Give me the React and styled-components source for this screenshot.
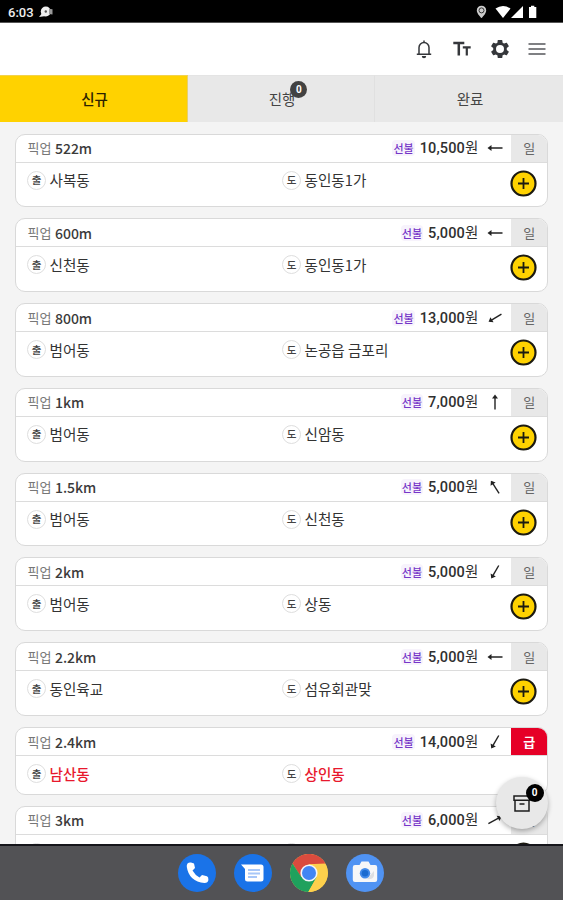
import React from 'react';
import styled, { createGlobalStyle } from 'styled-components';

const Global = createGlobalStyle`
  * { box-sizing: border-box; }
  body { margin: 0; overflow: hidden; font-family: "Noto Sans CJK KR", sans-serif; }
`;

const Screen = styled.div`
  width: 563px;
  height: 900px;
  display: flex;
  flex-direction: column;
  background: #f4f4f4;
  overflow: hidden;
  position: relative;
`;

const StatusBar = styled.header`
  height: 23px;
  flex: none;
  background: #000;
  border-bottom: 1px solid #555;
  display: flex;
  align-items: center;
  padding: 2px 25px 0 8px;
  color: #eee;
`;

const Clock = styled.span`
  font: 500 13px/20px Roboto, sans-serif;
  padding-top: 1px;
  margin-right: 5px;
`;

const StatusIcons = styled.div`
  margin-left: auto;
  display: flex;
  align-items: center;
`;

const Toolbar = styled.div`
  height: 52px;
  flex: none;
  background: #fff;
  display: flex;
  align-items: center;
  justify-content: flex-end;
  gap: 18px;
  padding-right: 17px;
`;

const Tabs = styled.nav`
  height: 47px;
  flex: none;
  display: grid;
  grid-template-columns: 188px 187px 188px;
`;

const Tab = styled.div`
  display: flex;
  align-items: center;
  justify-content: center;
  padding-left: 2px;
  background: ${(p) => (p.$active ? '#ffd200' : '#e8e8e8')};
  color: ${(p) => (p.$active ? '#2b2200' : '#444')};
  border-right: 1px solid ${(p) => (p.$active ? '#e5cf70' : '#e0e0e0')};
  border-top: 1px solid ${(p) => (p.$active ? '#f2d24c' : '#e4e4e4')};
  font-size: 14.5px;
  font-weight: ${(p) => (p.$active ? 500 : 400)};
  line-height: 20px;

  &:last-child {
    border-right: 0;
  }
`;

const TabLabel = styled.span`
  position: relative;
`;

const CountBadge = styled.span`
  position: absolute;
  display: flex;
  align-items: center;
  justify-content: center;
  border-radius: 50%;
  color: #fff;
  font: 700 10px/1 Roboto, sans-serif;
  width: ${(p) => p.$size}px;
  height: ${(p) => p.$size}px;
  top: ${(p) => p.$top}px;
  right: ${(p) => p.$right}px;
  background: ${(p) => p.$color};
`;

const List = styled.main`
  flex: 1;
  min-height: 0;
  overflow: hidden;
  display: flex;
  flex-direction: column;
  gap: 11px;
  padding: 11.5px 15px 0;
`;

const Card = styled.article`
  flex: none;
  height: ${(p) => (p.$urgent ? 67.5 : 73.8)}px;
  background: #fff;
  border: 1px solid #d9d9d9;
  border-radius: 10px;
  overflow: hidden;
`;

const CardHead = styled.div`
  height: 28px;
  display: flex;
  align-items: center;
  border-bottom: 1px solid #dcdcdc;
  padding-left: 11.5px;
`;

const Pickup = styled.span`
  font-size: 13px;
  line-height: 20px;
  color: #777;
  margin-right: 3.5px;
`;

const Distance = styled.span`
  font-size: 14px;
  font-weight: 500;
  line-height: 20px;
  color: #3b3b3b;
`;

const Prepaid = styled.span`
  margin-left: auto;
  margin-right: 5px;
  padding: 0 1px;
  border-radius: 4px;
  background: #f7f3fc;
  color: #7636c8;
  font-size: 11px;
  font-weight: 500;
  line-height: 16px;
`;

const Price = styled.span`
  font: 500 14.5px/20px Roboto, "Noto Sans CJK KR", sans-serif;
  letter-spacing: 0.15px;
  color: #303030;
`;

const Won = styled.span`
  font: 400 14.5px/20px "Noto Sans CJK KR", sans-serif;
`;

const ArrowSlot = styled.span`
  width: 32px;
  display: flex;
  justify-content: center;
`;

const Grade = styled.span`
  width: 36.5px;
  align-self: stretch;
  display: flex;
  align-items: center;
  justify-content: center;
  padding-left: 1px;
  font-size: 13px;
  line-height: 20px;
  font-weight: ${(p) => (p.$urgent ? 700 : 400)};
  color: ${(p) => (p.$urgent ? '#fff' : '#666')};
  background: ${(p) => (p.$urgent ? '#e60027' : '#e8e8e8')};
`;

const CardBody = styled.div`
  display: grid;
  grid-template-columns: 255px 1fr 27px;
  padding: 6.5px 10px 0 11px;
`;

const Place = styled.div`
  display: flex;
  align-items: center;
  height: 22px;
  gap: 3.5px;
  font-size: 14.6px;
  line-height: 22px;
  color: ${(p) => (p.$urgent ? '#e8182d' : '#333')};
  font-weight: ${(p) => (p.$urgent ? 500 : 400)};
`;

const Mark = styled.span`
  width: 19px;
  height: 19px;
  border: 1px solid #dedede;
  border-radius: 50%;
  display: flex;
  align-items: center;
  justify-content: center;
  color: #444;
  font-size: 10.5px;
  font-weight: 500;
  line-height: 16px;
`;

const AddButton = styled.button`
  width: 27px;
  height: 27px;
  margin-top: 0.5px;
  border: 0;
  padding: 0;
  background: none;
  display: block;
`;

const Fab = styled.button`
  position: absolute;
  left: 496px;
  top: 777px;
  width: 52px;
  height: 52px;
  border: 0;
  border-radius: 50%;
  background: #e8e8e8;
  box-shadow: 0 2px 5px rgba(0, 0, 0, 0.3);
  display: flex;
  align-items: center;
  justify-content: center;
  padding: 0;
`;

const Dock = styled.footer`
  height: 56px;
  flex: none;
  border-top: 2px solid #15151a;
  background: #525255;
  display: flex;
  justify-content: center;
  align-items: center;
  gap: 18px;
  padding-right: 1px;
`;

const ANGLES = { w: 180, sw: 149, n: -90, nw: -123, ssw: 120, ne: -28 };

const Arrow = ({ dir }) => (
  <svg width="18" height="18" viewBox="-9 -9 18 18" fill="none" stroke="#222" strokeWidth="1.4">
    <g transform={`rotate(${ANGLES[dir]})`}>
      <path d="M-7.5 0H6" />
      <path d="M3.5 -3L7.5 0L3.5 3" fill="#222" stroke="none" />
    </g>
  </svg>
);

const Plus = () => (
  <svg width="27" height="27" viewBox="0 0 27 27">
    <circle cx="13.5" cy="13.5" r="12" fill="#ffd200" stroke="#1c1a10" strokeWidth="2.2" />
    <path d="M13.5 8v11M8 13.5h11" stroke="#1c1a10" strokeWidth="1.8" />
  </svg>
);

const Notice = () => (
  <svg width="15" height="13" viewBox="0 0 15 13" fill="#eee">
    <circle cx="6.8" cy="5.5" r="5" />
    <path d="M0 11L4 6L7 10Z" />
    <path d="M10 2.8L13.5 3.2V8.5L10 8Z" fill="#999" />
    <circle cx="6.8" cy="5.5" r="1.2" fill="#555" />
  </svg>
);

const Signals = () => (
  <svg width="62" height="14" viewBox="0 0 62 14" fill="#fff">
    <path d="M5.5 .7a4.7 4.7 0 0 0-4.7 4.7C.8 8.8 5.5 13 5.5 13s4.7-4.2 4.7-7.6A4.7 4.7 0 0 0 5.5 .7Z" fill="#ccc" />
    <circle cx="5.5" cy="5.4" r="2.5" fill="none" stroke="#333" />
    <path d="M19.5 3.5Q27 -1.5 34.5 3.5L27 13Z" />
    <path d="M35 13L47 1V13Z" />
    <path d="M53 2h2V.7h3.3V2h2v11H53Z" />
  </svg>
);

const Bell = () => (
  <svg width="20" height="20" viewBox="0 0 20 20" fill="none" stroke="#35373b" strokeWidth="1.5">
    <path d="M5 15V8.5a5 5 0 0 1 10 0V15M2.8 15.3h14.4M10 1.5v2" />
    <path d="M7.8 17h4.4a2.2 2.2 0 0 1-4.4 0Z" fill="#35373b" stroke="none" />
  </svg>
);

const TextSize = () => (
  <svg width="20" height="20" viewBox="0 0 20 20" fill="none" stroke="#35373b" strokeWidth="2.5">
    <path d="M1.3 4h11M6.8 4v12.6" />
    <path d="M10.8 8.3h7.9M14.8 8.3v8.3" strokeWidth="2.2" />
  </svg>
);

const Gear = () => (
  <svg width="20" height="20" viewBox="1 1 22 22" fill="#35373b" fillRule="evenodd">
    <path d="M19.43 12.98c.04-.32.07-.64.07-.98s-.03-.66-.07-.98l2.11-1.65c.19-.15.24-.42.12-.64l-2-3.46c-.12-.22-.39-.3-.61-.22l-2.49 1c-.52-.4-1.08-.73-1.69-.98l-.38-2.65A.49.49 0 0 0 14 2h-4c-.25 0-.46.18-.49.42l-.38 2.65c-.61.25-1.17.59-1.69.98l-2.49-1c-.23-.09-.49 0-.61.22l-2 3.46c-.13.22-.07.49.12.64l2.11 1.65c-.04.32-.07.65-.07.98s.03.66.07.98l-2.11 1.65c-.19.15-.24.42-.12.64l2 3.46c.12.22.39.3.61.22l2.49-1c.52.4 1.08.73 1.69.98l.38 2.65c.03.24.24.42.49.42h4c.25 0 .46-.18.49-.42l.38-2.65c.61-.25 1.17-.59 1.69-.98l2.49 1c.23.09.49 0 .61-.22l2-3.46c.12-.22.07-.49-.12-.64l-2.11-1.65ZM12 16.4a4.4 4.4 0 1 1 0-8.8 4.4 4.4 0 0 1 0 8.8Z" />
  </svg>
);

const Menu = () => (
  <svg width="18" height="14" viewBox="0 0 18 14" stroke="#55575b" strokeWidth="1.7">
    <path d="M.5 2h17M.5 7h17M.5 12h17" />
  </svg>
);

const Box = () => (
  <svg width="18" height="19" viewBox="0 0 18 19" fill="none" stroke="#1c1c1c" strokeWidth="1.5">
    <path d="M1 2h16v4.2H1zM2 6.2V17h14V6.2M6.5 10h5" />
  </svg>
);

const Phone = () => (
  <svg width="38" height="38" viewBox="0 0 38 38">
    <circle cx="19" cy="19" r="19" fill="#1a73e8" />
    <path d="M9.5 9.5Q11 8 13 8.5L16 9.5L17 14L14.5 16.5Q17 21 21.5 23.5L24 21L29 22.2Q30.6 23 30.4 26Q30 29 26.5 29Q11 27.5 8.8 13Q8.5 11 9.5 9.5Z" fill="#fff" />
  </svg>
);

const Messages = () => (
  <svg width="38" height="38" viewBox="0 0 38 38">
    <circle cx="19" cy="19" r="19" fill="#1a73e8" />
    <path d="M7 10.5H27Q29.5 10.5 29.5 13V25Q29.5 27.5 27 27.5H13.5Q11 27.5 11 25V15Z" fill="#fff" />
    <path d="M14 16h12M14 19.5h12M14 23h9" stroke="#a8c7f8" strokeWidth="1.8" />
  </svg>
);

const Chrome = () => (
  <svg width="38" height="38" viewBox="0 0 38 38">
    <circle cx="19" cy="19" r="19" fill="#fdd04c" />
    <path d="M2.55 9.5A19 19 0 0 1 35.5 9.5L19 10.2L11 23Z" fill="#d94b3e" />
    <path d="M2.55 9.5A19 19 0 0 0 18.3 38L26.5 23.3L11.3 23Z" fill="#1fa15d" />
    <path d="M19 10.2H35.5A19 19 0 0 1 18.3 38L27 23Z" fill="#fdd04c" />
    <circle cx="19" cy="19" r="8.6" fill="#f4f6fa" />
    <circle cx="19" cy="19" r="7" fill="#4285f4" />
  </svg>
);

const Camera = () => (
  <svg width="38" height="38" viewBox="0 0 38 38">
    <circle cx="19" cy="19" r="19" fill="#5093f3" />
    <path d="M9 11h4.5l2-3.5h7l2 3.5H29q2.2 0 2.2 2.2v12.6q0 2.2-2.2 2.2H9q-2.2 0-2.2-2.2V13.2Q6.8 11 9 11Z" fill="#f7f7f8" />
    <path d="M21 25L28 17L28 22Q26 26 21 25Z" fill="#dedfe2" />
    <circle cx="19" cy="19.3" r="5.2" fill="#438bea" />
    <circle cx="19" cy="19.3" r="3.3" fill="#1b6bd0" />
  </svg>
);

const ORDERS = [
  ['522m', '10,500', 'w', '사복동', '동인동1가'],
  ['600m', '5,000', 'w', '신천동', '동인동1가'],
  ['800m', '13,000', 'sw', '범어동', '논공읍 금포리'],
  ['1km', '7,000', 'n', '범어동', '신암동'],
  ['1.5km', '5,000', 'nw', '범어동', '신천동'],
  ['2km', '5,000', 'ssw', '범어동', '상동'],
  ['2.2km', '5,000', 'w', '동인육교', '섬유회관맞'],
  ['2.4km', '14,000', 'ssw', '남산동', '상인동', true],
  ['3km', '6,000', 'ne', '', ''],
];

const Order = ({ data: [distance, price, dir, from, to, urgent] }) => (
  <Card $urgent={urgent}>
    <CardHead>
      <Pickup>픽업</Pickup>
      <Distance>{distance}</Distance>
      <Prepaid>선불</Prepaid>
      <Price>{price}<Won>원</Won></Price>
      <ArrowSlot><Arrow dir={dir} /></ArrowSlot>
      <Grade $urgent={urgent}>{urgent ? '급' : '일'}</Grade>
    </CardHead>
    <CardBody>
      <Place $urgent={urgent}><Mark>{from && '출'}</Mark>{from}</Place>
      <Place $urgent={urgent}><Mark>{to && '도'}</Mark>{to}</Place>
      {!urgent && <AddButton><Plus /></AddButton>}
    </CardBody>
  </Card>
);

export default function App() {
  return (
    <>
      <Global />
      <Screen>
        <StatusBar>
          <Clock>6:03</Clock>
          <Notice />
          <StatusIcons><Signals /></StatusIcons>
        </StatusBar>
        <Toolbar><Bell /><TextSize /><Gear /><Menu /></Toolbar>
        <Tabs>
          <Tab $active>신규</Tab>
          <Tab>
            <TabLabel>
              진행
              <CountBadge $size={17} $top={-8} $right={-12} $color="#424242">0</CountBadge>
            </TabLabel>
          </Tab>
          <Tab>완료</Tab>
        </Tabs>
        <List>
          {ORDERS.map((o) => <Order key={o[0]} data={o} />)}
        </List>
        <Dock><Phone /><Messages /><Chrome /><Camera /></Dock>
        <Fab>
          <Box />
          <CountBadge $size={18} $top={7} $right={4.5} $color="#000">0</CountBadge>
        </Fab>
      </Screen>
    </>
  );
}
